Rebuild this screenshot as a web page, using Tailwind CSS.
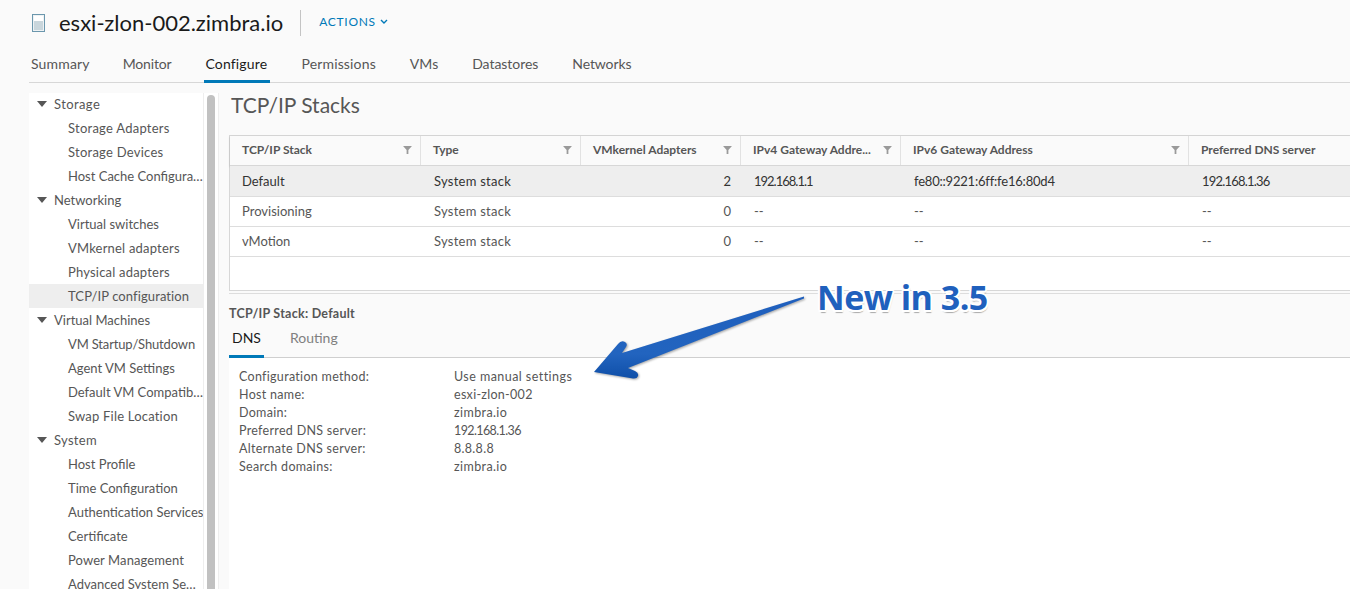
<!DOCTYPE html>
<html lang="en">
<head>
  <meta charset="UTF-8">
  <title>esxi-zlon-002.zimbra.io - Configure</title>
  <script src="https://cdn.jsdelivr.net/npm/@tailwindcss/browser@4"></script>
</head>
<body class="relative h-[589px] w-[1350px] overflow-hidden bg-[#fafafa] font-['Lato',sans-serif] text-[13px] text-[#565656]">

<!-- Header -->
<header class="flex h-[45px] items-center pl-[32px]">
  <svg width="13" height="18" viewBox="0 0 13 18">
    <rect x="0.5" y="0.5" width="12" height="17" fill="#eef2f4" stroke="#6b97ad"/>
    <rect x="2" y="2" width="9" height="5" fill="#fff"/>
    <rect x="2" y="7" width="9" height="9" fill="#c9d6dc"/>
  </svg>
  <h1 class="ml-[14px] text-[22px] leading-none text-[#1a1a1a]">esxi-zlon-002.zimbra.io</h1>
  <div class="ml-[17px] h-[26px] w-px bg-[#c4c4c4]"></div>
  <button class="ml-[18px] mt-[-2px] flex items-center gap-[4px] text-[12px] tracking-[0.7px] text-[#0079b8]">
    ACTIONS
    <svg width="8" height="6" viewBox="0 0 8 6"><path d="M1 1l3 3 3-3" fill="none" stroke="#0079b8" stroke-width="1.4"/></svg>
  </button>
</header>

<!-- Tabs -->
<nav class="ml-[29px] flex h-[38px] gap-[30px] border-b border-[#d7d7d7] text-[14px]">
  <a class="px-[2px] pt-[8px] tracking-[0.15px]">Summary</a>
  <a class="-ml-px px-[2px] pt-[8px] tracking-[-0.15px]">Monitor</a>
  <a class="-mb-px w-[66px] border-b-[3px] border-[#0079b8] px-[2px] pt-[8px] tracking-[0.15px] text-[#1a1a1a]">Configure</a>
  <a class="px-[2px] pt-[8px] tracking-[0.15px]">Permissions</a>
  <a class="px-[2px] pt-[8px]">VMs</a>
  <a class="px-[2px] pt-[8px] tracking-[-0.05px]">Datastores</a>
  <a class="px-[2px] pt-[8px] tracking-[-0.1px]">Networks</a>
</nav>

<div class="ml-[29px] mt-[10px] flex">
  <!-- Tree sidebar -->
  <aside class="h-[496px] w-[174px] shrink-0 overflow-hidden bg-white">
    <ul class="-mt-px leading-[24px]">
      <li class="flex h-[24px] items-center pl-[8px]"><svg width="10" height="6" viewBox="0 0 10 6"><path d="M0 0h10L5 6z" fill="#565656"/></svg><span class="ml-[7px] tracking-[0.4px]">Storage</span></li>
      <li class="h-[24px] truncate pl-[39px] tracking-[0.25px]">Storage Adapters</li>
      <li class="h-[24px] truncate pl-[39px] tracking-[0.25px]">Storage Devices</li>
      <li class="h-[24px] truncate pl-[39px]">Host Cache Configuration</li>
      <li class="flex h-[24px] items-center pl-[8px]"><svg width="10" height="6" viewBox="0 0 10 6"><path d="M0 0h10L5 6z" fill="#565656"/></svg><span class="ml-[7px]">Networking</span></li>
      <li class="h-[24px] truncate pl-[39px]">Virtual switches</li>
      <li class="h-[24px] truncate pl-[39px] tracking-[0.2px]">VMkernel adapters</li>
      <li class="h-[24px] truncate pl-[39px] tracking-[0.2px]">Physical adapters</li>
      <li class="h-[24px] truncate bg-[#eeeeee] pl-[39px] tracking-[0.1px]">TCP/IP configuration</li>
      <li class="flex h-[24px] items-center pl-[8px]"><svg width="10" height="6" viewBox="0 0 10 6"><path d="M0 0h10L5 6z" fill="#565656"/></svg><span class="ml-[7px]">Virtual Machines</span></li>
      <li class="h-[24px] truncate pl-[39px] tracking-[-0.15px]">VM Startup/Shutdown</li>
      <li class="h-[24px] truncate pl-[39px]">Agent VM Settings</li>
      <li class="h-[24px] truncate pl-[39px]">Default VM Compatibility</li>
      <li class="h-[24px] truncate pl-[39px] tracking-[0.2px]">Swap File Location</li>
      <li class="flex h-[24px] items-center pl-[8px]"><svg width="10" height="6" viewBox="0 0 10 6"><path d="M0 0h10L5 6z" fill="#565656"/></svg><span class="ml-[7px] tracking-[0.3px]">System</span></li>
      <li class="h-[24px] truncate pl-[39px]">Host Profile</li>
      <li class="h-[24px] truncate pl-[39px]">Time Configuration</li>
      <li class="h-[24px] overflow-hidden whitespace-nowrap pl-[39px]">Authentication Services</li>
      <li class="h-[24px] truncate pl-[39px]">Certificate</li>
      <li class="h-[24px] truncate pl-[39px] tracking-[0.1px]">Power Management</li>
      <li class="h-[24px] truncate pl-[39px]">Advanced System Settings</li>
    </ul>
  </aside>

  <!-- Scrollbar -->
  <div class="h-[496px] w-[16px] shrink-0 overflow-hidden border-x border-[#eeeeee] bg-white px-[3px] pt-[2px]">
    <div class="h-[520px] w-[8px] rounded-[4px] bg-[#c1c1c1]"></div>
  </div>

  <!-- Main -->
  <main class="ml-[10px] min-w-0 flex-1">
    <h2 class="ml-[2px] h-[42px] text-[21px] leading-[24px] text-[#565656]">TCP/IP Stacks</h2>

    <!-- Grid -->
    <div class="h-[156px] w-[1121px] border-y border-l border-[#d7d7d7] bg-white">
      <div class="flex h-[30px] items-center border-b border-[#d7d7d7] bg-[#fafafa] text-[12px] font-bold shadow-[0_1px_2px_rgba(0,0,0,0.18)]">
        <div class="flex h-full w-[191px] items-center justify-between border-r border-[#e2e2e2] pb-[2px] pl-[12px] pr-[8px]">TCP/IP Stack<svg width="9" height="8" viewBox="0 0 10 9"><path d="M0 0h10L6 4.5V9H4V4.5z" fill="#9a9a9a"/></svg></div>
        <div class="flex h-full w-[160px] items-center justify-between border-r border-[#e2e2e2] pb-[2px] pl-[12px] pr-[8px]">Type<svg width="9" height="8" viewBox="0 0 10 9"><path d="M0 0h10L6 4.5V9H4V4.5z" fill="#9a9a9a"/></svg></div>
        <div class="flex h-full w-[160px] items-center justify-between border-r border-[#e2e2e2] pb-[2px] pl-[12px] pr-[8px]">VMkernel Adapters<svg width="9" height="8" viewBox="0 0 10 9"><path d="M0 0h10L6 4.5V9H4V4.5z" fill="#9a9a9a"/></svg></div>
        <div class="flex h-full w-[160px] items-center justify-between border-r border-[#e2e2e2] pb-[2px] pl-[12px] pr-[8px]">IPv4 Gateway Addre...<svg width="9" height="8" viewBox="0 0 10 9"><path d="M0 0h10L6 4.5V9H4V4.5z" fill="#9a9a9a"/></svg></div>
        <div class="flex h-full w-[288px] items-center justify-between border-r border-[#e2e2e2] pb-[2px] pl-[12px] pr-[8px]">IPv6 Gateway Address<svg width="9" height="8" viewBox="0 0 10 9"><path d="M0 0h10L6 4.5V9H4V4.5z" fill="#9a9a9a"/></svg></div>
        <div class="flex h-full flex-1 items-center pb-[2px] pl-[12px]">Preferred DNS server</div>
      </div>
      <div class="flex h-[31px] items-center border-b border-[#dddddd] bg-[#eeeeee] pt-[1px] text-[#333333]">
        <div class="w-[191px] pl-[12px]">Default</div>
        <div class="w-[160px] pl-[13px] tracking-[0.25px]">System stack</div>
        <div class="w-[160px] pr-[10px] text-right">2</div>
        <div class="w-[160px] pl-[13px] tracking-[-1px]">192.168.1.1</div>
        <div class="w-[288px] pl-[13px] tracking-[-0.2px]">fe80::9221:6ff:fe16:80d4</div>
        <div class="pl-[13px] tracking-[-0.8px]">192.168.1.36</div>
      </div>
      <div class="flex h-[30px] items-center border-b border-[#dddddd]">
        <div class="w-[191px] pl-[12px]">Provisioning</div>
        <div class="w-[160px] pl-[13px] tracking-[0.25px]">System stack</div>
        <div class="w-[160px] pr-[10px] text-right">0</div>
        <div class="w-[160px] pl-[13px]">--</div>
        <div class="w-[288px] pl-[13px]">--</div>
        <div class="pl-[13px]">--</div>
      </div>
      <div class="flex h-[30px] items-center border-b border-[#dddddd]">
        <div class="w-[191px] pl-[12px]">vMotion</div>
        <div class="w-[160px] pl-[13px] tracking-[0.25px]">System stack</div>
        <div class="w-[160px] pr-[10px] text-right">0</div>
        <div class="w-[160px] pl-[13px]">--</div>
        <div class="w-[288px] pl-[13px]">--</div>
        <div class="pl-[13px]">--</div>
      </div>
    </div>
    <div class="mt-[2px] h-px bg-[#dddddd]"></div>

    <!-- Detail -->
    <h3 class="mt-[12px] text-[12.5px] font-bold leading-[16px] tracking-[0.25px]">TCP/IP Stack: Default</h3>
    <div class="mt-[7px] flex h-[29px] gap-[26px] border-b border-[#cfcfcf] text-[14px] leading-[18px]">
      <a class="-mb-px h-[29px] border-b-[3px] border-[#0079b8] px-[3px] text-[#1a1a1a]">DNS</a>
      <a class="text-[#808080]">Routing</a>
    </div>
    <dl class="grid h-[240px] grid-cols-[215px_1fr] content-start bg-white pl-[10px] pt-[10px] text-[12.5px] leading-[18px] tracking-[0.3px]">
      <dt>Configuration method:</dt><dd class="tracking-[0.45px]">Use manual settings</dd>
      <dt>Host name:</dt><dd>esxi-zlon-002</dd>
      <dt>Domain:</dt><dd class="tracking-[0.4px]">zimbra.io</dd>
      <dt>Preferred DNS server:</dt><dd class="tracking-[-0.6px]">192.168.1.36</dd>
      <dt>Alternate DNS server:</dt><dd>8.8.8.8</dd>
      <dt>Search domains:</dt><dd class="tracking-[0.4px]">zimbra.io</dd>
    </dl>
  </main>
</div>

<!-- Annotation -->
<svg class="absolute left-0 top-0 drop-shadow-[1px_1px_1px_rgba(0,0,0,0.35)]" width="1350" height="589" viewBox="0 0 1350 589">
  <defs>
    <linearGradient id="arrowFill" x1="0" y1="0" x2="0" y2="1">
      <stop offset="0" stop-color="#1f5fbd"/>
      <stop offset="0.7" stop-color="#2264bf"/>
      <stop offset="1" stop-color="#0f4fa8"/>
    </linearGradient>
  </defs>
  <path d="M804 296.5 L804 298.5 L628 368 L635 371 Q639 373 638 376 Q637 379 633 378.500 L594 372 L618 344 Q621 340 625 342 Q628 344 626 347 L622 353 Z" fill="url(#arrowFill)"/>
</svg>
<div class="absolute left-[817px] top-[276px] font-['Open_Sans',sans-serif] text-[34px] font-bold leading-[42px] tracking-[-0.5px] text-[#1f60bd] [text-shadow:2px_0_0_#fff,-2px_0_0_#fff,0_2px_0_#fff,0_-2px_0_#fff,1.500px_1.500px_0_#fff,-1.500px_-1.500px_0_#fff,1.500px_-1.500px_0_#fff,-1.500px_1.500px_0_#fff,1px_3px_1px_#a8a8a8]">New in 3.5</div>

</body>
</html>
